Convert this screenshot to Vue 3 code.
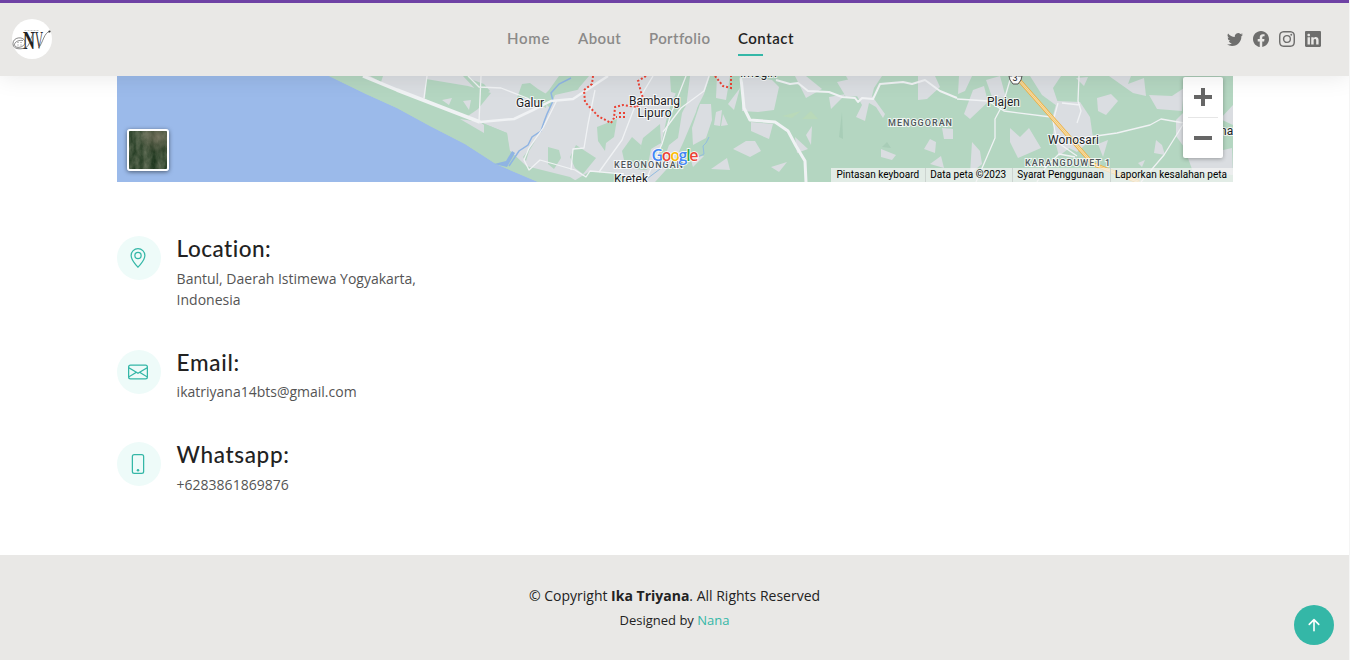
<script setup>
const links = ['Home', 'About', 'Portfolio', 'Contact']

const socials = [
  { name: 'Twitter', d: 'M5.026 15c6.038 0 9.341-5.003 9.341-9.334 0-.14 0-.282-.006-.422A6.685 6.685 0 0 0 16 3.542a6.658 6.658 0 0 1-1.889.518 3.301 3.301 0 0 0 1.447-1.817 6.533 6.533 0 0 1-2.087.793A3.286 3.286 0 0 0 7.875 6.03a9.325 9.325 0 0 1-6.767-3.429 3.289 3.289 0 0 0 1.018 4.382A3.323 3.323 0 0 1 .64 6.575v.045a3.288 3.288 0 0 0 2.632 3.218 3.203 3.203 0 0 1-.865.115 3.23 3.23 0 0 1-.614-.057 3.283 3.283 0 0 0 3.067 2.277A6.588 6.588 0 0 1 .78 13.58a6.32 6.32 0 0 1-.78-.045A9.344 9.344 0 0 0 5.026 15z' },
  { name: 'Facebook', d: 'M16 8.049c0-4.446-3.582-8.05-8-8.05C3.58 0-.002 3.603-.002 8.05c0 4.017 2.926 7.347 6.75 7.951v-5.625h-2.03V8.05H6.75V6.275c0-2.017 1.195-3.131 3.022-3.131.876 0 1.791.157 1.791.157v1.98h-1.009c-.993 0-1.303.621-1.303 1.258v1.51h2.218l-.354 2.326H9.25V16c3.824-.604 6.75-3.934 6.75-7.951z' },
  { name: 'Instagram', d: 'M8 0C5.829 0 5.556.01 4.703.048 3.85.088 3.269.222 2.76.42a3.917 3.917 0 0 0-1.417.923A3.927 3.927 0 0 0 .42 2.76C.222 3.268.087 3.85.048 4.7.01 5.555 0 5.827 0 8.001c0 2.172.01 2.444.048 3.297.04.852.174 1.433.372 1.942.205.526.478.972.923 1.417.444.445.89.719 1.416.923.51.198 1.09.333 1.942.372C5.555 15.99 5.827 16 8 16s2.444-.01 3.298-.048c.851-.04 1.434-.174 1.943-.372a3.916 3.916 0 0 0 1.416-.923c.445-.445.718-.891.923-1.417.197-.509.332-1.09.372-1.942C15.99 10.445 16 10.173 16 8s-.01-2.445-.048-3.299c-.04-.851-.175-1.433-.372-1.941a3.926 3.926 0 0 0-.923-1.417A3.911 3.911 0 0 0 13.24.42c-.51-.198-1.092-.333-1.943-.372C10.443.01 10.172 0 7.998 0h.003zm-.717 1.442h.718c2.136 0 2.389.007 3.232.046.78.035 1.204.166 1.486.275.373.145.64.319.92.599.28.28.453.546.598.92.11.281.24.705.275 1.485.039.843.047 1.096.047 3.231s-.008 2.389-.047 3.232c-.035.78-.166 1.203-.275 1.485a2.47 2.47 0 0 1-.599.919c-.28.28-.546.453-.92.598-.28.11-.704.24-1.485.276-.843.038-1.096.047-3.232.047s-2.39-.009-3.233-.047c-.78-.036-1.203-.166-1.485-.276a2.478 2.478 0 0 1-.92-.598 2.48 2.48 0 0 1-.6-.92c-.109-.281-.24-.705-.275-1.485-.038-.843-.046-1.096-.046-3.233 0-2.136.008-2.388.046-3.231.036-.78.166-1.204.276-1.486.145-.373.319-.64.599-.92.28-.28.546-.453.92-.598.282-.11.705-.24 1.485-.276.738-.034 1.024-.044 2.515-.045v.002zm4.988 1.328a.96.96 0 1 0 0 1.92.96.96 0 0 0 0-1.92zm-4.27 1.122a4.109 4.109 0 1 0 0 8.217 4.109 4.109 0 0 0 0-8.217zm0 1.441a2.667 2.667 0 1 1 0 5.334 2.667 2.667 0 0 1 0-5.334z' },
  { name: 'LinkedIn', d: 'M0 1.146C0 .513.526 0 1.175 0h13.65C15.474 0 16 .513 16 1.146v13.708c0 .633-.526 1.146-1.175 1.146H1.175C.526 16 0 15.487 0 14.854V1.146zm4.943 12.248V6.169H2.542v7.225h2.401zm-1.2-8.212c.837 0 1.358-.554 1.358-1.248-.015-.709-.52-1.248-1.342-1.248-.822 0-1.359.54-1.359 1.248 0 .694.521 1.248 1.327 1.248h.016zm4.908 8.212V9.359c0-.216.016-.432.08-.586.173-.431.568-.878 1.232-.878.869 0 1.216.662 1.216 1.634v3.865h2.401V9.25c0-2.22-1.184-3.252-2.764-3.252-1.274 0-1.845.7-2.165 1.193v.025h-.016a5.54 5.54 0 0 1 .016-.025V6.169h-2.4c.03.678 0 7.225 0 7.225h2.4z' },
]

const contacts = [
  {
    key: 'location', title: 'Location:', lines: ['Bantul, Daerah Istimewa Yogyakarta,', 'Indonesia'],
    paths: ['M12.166 8.94c-.524 1.062-1.234 2.12-1.96 3.07A31.493 31.493 0 0 1 8 14.58a31.481 31.481 0 0 1-2.206-2.57c-.726-.95-1.436-2.008-1.96-3.07C3.304 7.867 3 6.862 3 6a5 5 0 0 1 10 0c0 .862-.305 1.867-.834 2.94zM8 16s6-5.686 6-10A6 6 0 0 0 2 6c0 4.314 6 10 6 10z', 'M8 8a2 2 0 1 1 0-4 2 2 0 0 1 0 4zm0 1a3 3 0 1 0 0-6 3 3 0 0 0 0 6z'],
  },
  {
    key: 'email', title: 'Email:', lines: ['ikatriyana14bts@gmail.com'],
    paths: ['M0 4a2 2 0 0 1 2-2h12a2 2 0 0 1 2 2v8a2 2 0 0 1-2 2H2a2 2 0 0 1-2-2V4zm2-1a1 1 0 0 0-1 1v.217l7 4.2 7-4.2V4a1 1 0 0 0-1-1H2zm13 2.383-4.758 2.855L15 11.114v-5.73zm-.034 6.878L9.271 8.82 8 9.583 6.728 8.82l-5.694 3.44A1 1 0 0 0 2 13h12a1 1 0 0 0 .966-.739zM1 11.114l4.758-2.876L1 5.383v5.73z'],
  },
  {
    key: 'phone', title: 'Whatsapp:', lines: ['+6283861869876'],
    paths: ['M11 1a1 1 0 0 1 1 1v12a1 1 0 0 1-1 1H5a1 1 0 0 1-1-1V2a1 1 0 0 1 1-1h6zM5 0a2 2 0 0 0-2 2v12a2 2 0 0 0 2 2h6a2 2 0 0 0 2-2V2a2 2 0 0 0-2-2H5z', 'M8 14a1 1 0 1 0 0-2 1 1 0 0 0 0 2z'],
  },
]

const credits = ['Pintasan keyboard', 'Data peta ©2023', 'Syarat Penggunaan', 'Laporkan kesalahan peta']

// Built-up areas east of the river plain
const settlements = [
  '690,76 710,76 704,94 696,110 686,108', '717,76 730,76 726,100 716,98', '740,88 734,110 728,104',
  '744,76 772,80 779,87 774,110 758,112 742,111 743,76', '751,122 773,124 769,139 751,131',
  '700,104 711,104 712,120 706,138 693,145 692,128', '716,112 722,110 720,126 714,125', '723,114 728,125 721,126',
  '746,141 755,141 761,151 750,157 733,149', '771,167 787,162 779,172', '727,158 730,170 711,169', '795,137 808,149 797,153',
  '806,135 812,126 811,145', '690,157 704,156 693,167', '795,76 806,76 822,89 806,98',
  '829,97 846,94 831,109', '846,76 882,76 874,88 872,96 885,114 883,118 876,107 869,103 865,121 856,117 862,105',
  '837,82 864,76 871,84 860,96 846,97', '918,76 935,76 940,87 927,99 918,100',
  '930,139 936,142 935,153 924,149', '881,149 896,155 892,160 881,157', '942,128 953,129 953,139 944,139',
  '959,76 972,76 965,91 958,94', '986,80 1000,76 1006,98 992,97', '973,90 984,86 988,102 970,119 964,114',
  '1010,128 1020,137 1029,128 1041,148 1018,158 1010,142', '1030,76 1061,76 1053,88 1058,103 1080,110 1082,134 1072,146 1059,156 1053,134 1057,106 1042,95',
  '1057,101 1080,102 1090,117 1093,138 1077,152 1059,143 1052,119', '1097,98 1111,94 1118,101 1106,115 1098,111',
  '1109,76 1131,76 1128,84 1144,78 1146,96 1133,93', '1076,78 1088,77 1084,86', '1149,95 1172,96 1184,88 1182,111 1157,109',
  '1156,140 1162,145 1165,155 1154,153', '1138,163 1145,160 1142,167', '1176,120 1185,111 1184,147 1176,136', '1098,144 1108,140 1103,157',
  '972,142 980,151 982,164 970,174', '930,164 941,156 944,168', '1220,119 1233,105 1233,125', '1188,158 1232,148 1233,175 1193,172',
]

// Fields and gardens between Galur and Bambang Lipuro
const fields = [
  '426,76 463,76 482,96 490,91 484,84 473,80 468,76', '426,79 468,86 478,89 491,93 478,109 465,118 425,99',
  '517,98 522,84 530,83 538,89 548,95 546,108 528,98', '542,97 549,90 559,76 589,76 577,90 555,95 550,108 545,103',
  '536,140 529,151 526,161 523,157', '548,147 559,150 561,158 554,169 548,164',
  '576,145 596,158 583,174 575,168 570,157', '569,76 582,76 578,90 571,84',
  '597,127 617,119 614,137 606,143 605,151 598,141', '670,76 688,76 678,94 671,92',
  '622,151 632,137 641,145 639,160 630,166 624,160', '643,138 660,124 661,143 651,149 647,170 635,169',
  '668,112 683,76 704,76 695,87 682,113 678,138 669,145 664,159 659,155', '677,76 690,76 685,108 679,105',
]
</script>

<template>
  <div class="page">
    <header class="header">
      <div class="brand">
        <svg class="logo" viewBox="0 0 40 40" role="img" aria-label="NV">
          <circle cx="20" cy="20" r="20" fill="#fff" />
          <text x="11" y="29.500" class="mono-n" textLength="12" lengthAdjust="spacingAndGlyphs">N</text>
          <text x="23" y="29.500" class="mono-v" textLength="8" lengthAdjust="spacingAndGlyphs">V</text>
          <g fill="none" stroke="#555" stroke-width=".7">
            <path d="M26.500 29C31 24 32 13 38 12.500" />
            <path d="M21 15C18 20 18 29 11 29.500 5 30.500 1 29 1 24.500 1 18 11 17 13 22 14.500 28 3 31 2.500 25.500 3 22 8 21 11 21.500" />
            <path d="M5 23.500h6M5 26h6M12.500 11.500h14" stroke="#aaa" stroke-dasharray="2 1" />
          </g>
          <circle cx="37.500" cy="12.500" r="1.100" fill="#333" />
        </svg>
      </div>
      <nav class="nav">
        <a v-for="link in links" :key="link" :class="['nav-link', link.toLowerCase()]">{{ link }}</a>
      </nav>
      <div class="socials">
        <svg v-for="s in socials" :key="s.name" viewBox="0 0 16 16" :aria-label="s.name"><path :d="s.d" /></svg>
      </div>
    </header>

    <main class="content">
      <div class="map">
        <svg class="map-canvas" viewBox="117 76 1116 106">
          <rect x="117" y="76" width="1116" height="106" fill="#b4d6c1" />
          <path d="M363 76H705L696 112 683 143 675 160 655 182H540L525 165 509 150 507 133 480 122 397 90Z" fill="#dadde1" />
          <path d="M117 76H329L366 94 397 108 430 126 465 144 496 164 538 182H117Z" fill="#9bbaea" />
          <path d="M329 76H363L397 91 440 108 480 122 507 133 510 151 526 166 570 177 578 182H538L496 164 465 144 430 126 397 108 366 94Z" fill="#b4d6c1" />
          <path d="M370 76H383L381 82Z" fill="#b4d6c1" />
          <polygon v-for="f in fields" :key="f" :points="f" fill="#b4d6c1" />
          <path d="M442 100l10-2-3 7zM463 101l8-1-2 10z" fill="#dadde1" />
          <path d="M557 177l17 4 16-10 24 1 15 10H560Z" fill="#b4d6c1" />
          <path d="M480 122l4 3v8l-24-14z" fill="#dadde1" />
          <polygon v-for="s in settlements" :key="s" :points="s" fill="#dadde1" />
          <path d="M842 112l1 27-4-2zM887 142l4 6-9-1z" fill="#a8cdb7" />
          <path d="M782 116l19-5-9 7zM802 119l9-8 7 8z" fill="#b9d9b9" />
          <path d="M571 78l-12 6-8 9 2 8-6 13-3 8-3 9-9 6-4 8-9 6-10 15" fill="none" stroke="#8fb4e3" stroke-width="1.500" />
          <path d="M494 164l12-3 6-10 3 2-8 14z" fill="#8fb4e3" />
          <path d="M709 137l-3 6-3 3 1 8-6 3M648 178l16-12" fill="none" stroke="#91bce0" stroke-width="1" />
          <g class="roads">
            <path d="M363 76L397 90 480 122" stroke-width="3.500" />
            <path d="M480 122L514 119 533 110 551 101 573 99 608 76" stroke-width="2.500" />
            <path d="M427 76L424 98M481 76L479 122M468 76L479 87 501 88 527 98 538 105" />
            <path d="M557 100L543 128 529 148 524 160 529 170 540 160 575 170 586 177 590 171 624 174M571 170L573 149 584 148 588 124 595 90" />
            <path d="M653 76L635 106 622 140 599 172M645 182L662 144 671 114 686 76" />
            <path d="M709 76L704 91 681 108 663 132" />
            <path d="M741 78L744 108 750 120 775 122 788 131 796 146 805 161 806 182" stroke-width="3" />
            <path d="M776 80L790 84 798 83 808 91 829 92 842 97 855 98 858 102 862 98 873 99 880 84 903 82 912 84 925 80 940 91 957 98" stroke-width="2" />
            <path d="M957 99L988 101 1004 111 1051 117M1010 80L1003 104 995 119 995 138 986 159 976 182" />
            <path d="M1079 76L1078 101 1081 111 1077 123M1058 103L1053 121 1057 142 1077 156M1062 103L1080 105M1075 157L1059 154 1045 168 1037 182" />
            <path d="M1082 138L1117 133 1150 125 1161 119 1184 123M1141 182L1164 155 1184 123" />
          </g>
          <path d="M1019 80L1093 164 1139 182" fill="none" stroke="#efae3d" stroke-width="4" />
          <path d="M1019 80L1093 164 1139 182" fill="none" stroke="#f7e0ac" stroke-width="2.400" />
          <path d="M1019 80L1093 164 1139 182" fill="none" stroke="#efb957" stroke-width=".6" />
          <path d="M593 76L592 84 584 90 585 102 598 116 611 123 614 118 615 107 623 105 637 107M619 113h5v4h-8M646 76L638 81 641 92 643 98 637 107M715 76L723 86 731 88 731 76" class="boundary" />
          <path d="M1009 76L1010 80 1013 84H1018L1021 80 1022 76Z" fill="#fff" stroke="#555" />
          <g class="towns">
            <text x="1012.500" y="81" font-size="9">3</text>
            <text x="516" y="107" textLength="28">Galur</text>
            <text x="629" y="105" textLength="51">Bambang</text>
            <text x="637.500" y="117" textLength="34">Lipuro</text>
            <text x="614" y="183" textLength="34">Kretek</text>
            <text x="740" y="77" textLength="37">Imogiri</text>
            <text x="987" y="106" textLength="33">Plajen</text>
            <text x="1048" y="144" textLength="51">Wonosari</text>
            <text x="1220" y="135">na</text>
          </g>
          <g class="districts">
            <text x="614" y="168" textLength="69">KEBONONGAN</text>
            <text x="888" y="126" textLength="64">MENGGORAN</text>
            <text x="1025" y="166" textLength="85">KARANGDUWET 1</text>
          </g>
          <text class="google" x="651.500" y="161" textLength="47"><tspan fill="#4285f4">G</tspan><tspan fill="#ea4335">o</tspan><tspan fill="#fbbc05">o</tspan><tspan fill="#4285f4">g</tspan><tspan fill="#34a853">l</tspan><tspan fill="#ea4335">e</tspan></text>
        </svg>
        <svg class="satellite" viewBox="0 0 38 38">
          <defs>
            <filter id="terrain" x="0" y="0" width="1" height="1" color-interpolation-filters="sRGB">
              <feTurbulence type="fractalNoise" baseFrequency=".14 .08" numOctaves="4" seed="6" />
              <feColorMatrix values=".4 0 0 0 .04  .33 0 0 0 .15  .34 0 0 0 .05  0 0 0 0 1" />
            </filter>
            <radialGradient id="clearing" cx=".72" cy=".15" r=".5">
              <stop offset="0" stop-color="#92806f" stop-opacity=".5" />
              <stop offset="1" stop-color="#92806f" stop-opacity="0" />
            </radialGradient>
          </defs>
          <rect width="38" height="38" filter="url(#terrain)" />
          <rect width="38" height="38" fill="url(#clearing)" />
        </svg>
        <div class="zoom"><span class="plus"></span><i></i><span></span></div>
        <div class="credits"><span v-for="c in credits" :key="c">{{ c }}</span></div>
      </div>

      <section class="info">
        <article v-for="c in contacts" :key="c.key" class="entry">
          <div class="badge"><svg viewBox="0 0 16 16"><path v-for="p in c.paths" :key="p" :d="p" /></svg></div>
          <div>
            <h4 :class="c.key">{{ c.title }}</h4>
            <p v-for="l in c.lines" :key="l">{{ l }}</p>
          </div>
        </article>
      </section>
    </main>

    <footer class="footer">
      <div class="copyright">© Copyright <strong>Ika Triyana</strong>. All Rights Reserved</div>
      <div class="designer">Designed by <a>Nana</a></div>
    </footer>
    <a class="to-top" aria-label="Back to top">
      <svg viewBox="0 0 16 16"><path d="M8 12.500V3.700M4.200 7.500 8 3.700l3.800 3.800" /></svg>
    </a>
  </div>
</template>

<style>
body { margin: 0; background: #f5f5f5; overflow: hidden; }
</style>

<style scoped>
.page { position: relative; width: 1349px; height: 660px; display: flex; flex-direction: column; background: #fff; font-family: "Open Sans", sans-serif; color: #222; overflow: hidden; }
.header { position: relative; z-index: 2; flex: none; height: 76px; box-sizing: border-box; padding-bottom: 2px; border-top: 3px solid #6f42a5; background: #e9e8e6; box-shadow: 0 0 25px rgba(0, 0, 0, .1); display: grid; grid-template-columns: 507px 1fr 122px; align-items: center; }
.brand { padding-left: 12px; }
.logo { display: block; width: 40px; height: 40px; }
.mono-n { font: bold 26px "Liberation Serif", serif; fill: #222; }
.mono-v { font: 26px "Liberation Serif", serif; fill: #333; }
.nav { display: flex; gap: 28px; margin-top: -1px; font: 600 15px/20px Lato, sans-serif; color: #8b8a89; }
.nav-link { position: relative; white-space: nowrap; }
.home { width: 43px; letter-spacing: .7px; }
.about { width: 43px; letter-spacing: .4px; }
.portfolio { width: 61px; letter-spacing: .38px; }
.contact { width: 57px; color: #222; letter-spacing: .5px; }
.contact::after { content: ""; position: absolute; left: 0; top: 26px; width: 25px; height: 2px; background: #34b7a7; }
.socials { display: flex; gap: 10px; }
.socials svg { width: 16px; height: 16px; margin-left: .3px; margin-right: -.3px; fill: #6e6e6d; }
.content { flex: none; height: 479px; box-sizing: border-box; padding: 0 116px 0 117px; }
.map { position: relative; height: 106px; overflow: hidden; }
.map-canvas { display: block; width: 1116px; height: 106px; }
.roads { fill: none; stroke: #f0f2f4; stroke-width: 1.300; stroke-linejoin: round; }
.boundary { fill: none; stroke: #ea4335; stroke-width: 2; stroke-dasharray: 2 2; }
.towns { font: 12px Roboto, sans-serif; fill: #202124; stroke: #fff; stroke-width: 2px; stroke-opacity: .8; paint-order: stroke; }
.districts { font: 500 9px Roboto, sans-serif; fill: #50565b; stroke: #fff; stroke-width: 2px; stroke-opacity: .8; paint-order: stroke; }
.google { font: 600 16px "Open Sans", sans-serif; stroke: #fff; stroke-width: 1.500px; paint-order: stroke; }
.satellite { position: absolute; left: 10px; top: 53px; width: 38px; height: 38px; border: 2px solid #fff; border-radius: 3px; box-shadow: 0 1px 4px rgba(0, 0, 0, .5); }
.zoom { position: absolute; left: 1066px; top: 1px; width: 40px; height: 81px; display: flex; flex-direction: column; align-items: center; background: #fff; border-radius: 2px; box-shadow: 0 1px 4px rgba(0, 0, 0, .3); }
.zoom span { position: relative; width: 18px; height: 4px; margin: 18px 0; background: #666; }
.zoom i { width: 30px; height: 1px; background: #e6e6e6; }
.plus::after { content: ""; position: absolute; left: 7px; top: -7px; width: 4px; height: 18px; background: #666; }
.credits { position: absolute; right: 0; bottom: 0; display: flex; height: 14px; font: 10px/14px Roboto, sans-serif; letter-spacing: .03px; color: #000; background: rgba(245, 245, 245, .7); }
.credits span { padding: 0 6px 0 5px; white-space: nowrap; }
.credits span + span { box-shadow: inset 1px 0 #ccd4d0; }
.info { padding-top: 54px; }
.entry { display: flex; gap: 15.600px; margin-bottom: 40px; }
.badge { flex: none; width: 44px; height: 44px; border-radius: 50%; background: #eefbf9; display: grid; place-items: center; }
.badge svg { width: 20px; height: 20px; margin-right: 2px; fill: #34b7a7; }
h4 { margin: 0 0 5px; font: 500 22.500px/26.400px Lato, sans-serif; color: #222; }
.entry:first-child h4 { margin-bottom: 5.600px; }
.entry:last-child h4 { margin-bottom: 5.600px; }
h4.location { letter-spacing: .5px; }
h4.email { letter-spacing: .7px; }
h4.phone { letter-spacing: .65px; }
p { margin: 0; font-size: 14px; line-height: 21px; color: #545454; }
.footer { flex: 1; padding-top: 30px; text-align: center; background: #e9e8e6; font-size: 14px; line-height: 21px; }
.designer { padding-top: 5px; font-size: 13px; line-height: 19.500px; }
.designer a { color: #34b7a7; }
.to-top { position: absolute; right: 15px; bottom: 15px; width: 40px; height: 40px; border-radius: 50%; background: #34b7a7; display: grid; place-items: center; }
.to-top svg { width: 20px; height: 20px; fill: none; stroke: #fff; stroke-width: 1.300; stroke-linecap: round; stroke-linejoin: round; }
</style>
